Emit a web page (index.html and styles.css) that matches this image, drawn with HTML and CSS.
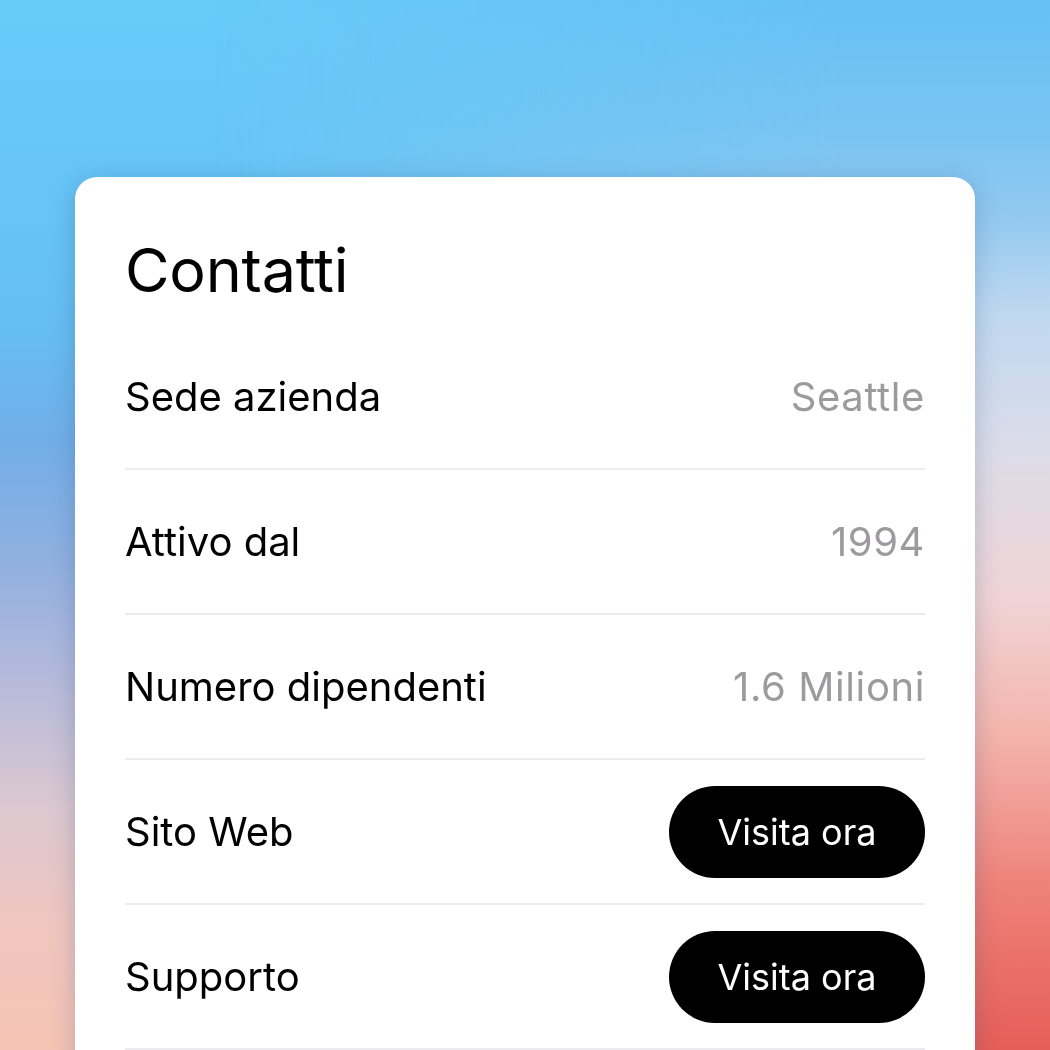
FILE: index.html
```html
<!DOCTYPE html>
<html lang="it">
<head>
  <meta charset="UTF-8" />
  <meta name="viewport" content="width=device-width, initial-scale=1.0" />
  <title>Contatti</title>
  <link rel="stylesheet" href="styles.css">
</head>
<body>
  <div class="card">
    <h1>Contatti</h1>
    <div class="row">
      <span class="label">Sede azienda</span>
      <span class="value">Seattle</span>
    </div>
    <div class="row">
      <span class="label">Attivo dal</span>
      <span class="value">1994</span>
    </div>
    <div class="row">
      <span class="label">Numero dipendenti</span>
      <span class="value">1.6 Milioni</span>
    </div>
    <div class="row">
      <span class="label">Sito Web</span>
      <button class="visit-btn">Visita ora</button>
    </div>
    <div class="row">
      <span class="label">Supporto</span>
      <button class="visit-btn">Visita ora</button>
    </div>
  </div>
</body>
</html>
```

FILE: styles.css
```css
html, body {
  height: 100%;
}
body {
  margin: 0;
  overflow: hidden;
  font-family: Inter, "Noto Sans", sans-serif;
  /* left edge of the backdrop */
  background: linear-gradient(to bottom, #68cbf8 0%, #66c4f6 20%, #66bdf2 32%, #72aee8 42%, #8fb0e0 53%, #b0b8dc 63%, #dcc8d0 77%, #f0c6c0 88%, #f6c4b4 100%);
  padding: 177px 75px 0;
  box-sizing: border-box;
  position: relative;
}
/* right edge of the backdrop, faded in from the left */
body::before {
  content: "";
  position: fixed;
  inset: 0;
  z-index: -1;
  background: linear-gradient(to bottom, #66c0f4 0%, #78c4f2 12%, #90c8f0 20%, #c0d8f0 30%, #dcdce8 43%, #f0d4d6 57%, #f4b4ac 70%, #ee8078 85%, #e65e58 100%);
  -webkit-mask-image: linear-gradient(to right, transparent 20%, #000 80%);
  mask-image: linear-gradient(to right, transparent 20%, #000 80%);
}
.card {
  background: #ffffff;
  border-radius: 22px;
  padding: 50px 50px 0;
  min-height: 1000px;
  box-shadow: 0 4px 24px rgba(40, 70, 120, 0.25);
}
h1 {
  margin: 0 0 12px;
  font-weight: 400;
  font-size: 61px;
  line-height: 86px;
  color: #000;
  letter-spacing: -0.2px;
}
.row {
  display: flex;
  align-items: center;
  justify-content: space-between;
  height: 143px;
  border-bottom: 2px solid #ececee;
}
.label {
  font-size: 40px;
  color: #000;
}
.value {
  font-size: 40px;
  letter-spacing: 0.6px;
  color: #9d9a9f;
}
.visit-btn {
  font-family: inherit;
  font-size: 36px;
  color: #fff;
  background: #000;
  border: none;
  border-radius: 46px;
  width: 256px;
  height: 92px;
  padding: 0;
  cursor: pointer;
}
```
